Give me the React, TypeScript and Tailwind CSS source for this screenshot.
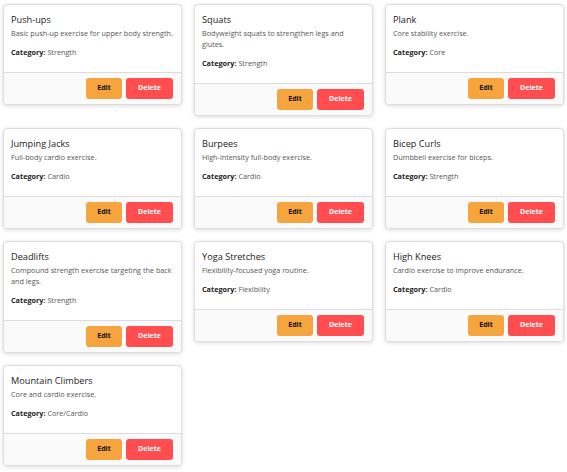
import React from 'react';

interface Exercise {
  name: string;
  description: string;
  category: string;
}

const exercises: Exercise[] = [
  { name: 'Push-ups', description: 'Basic push-up exercise for upper body strength.', category: 'Strength' },
  { name: 'Squats', description: 'Bodyweight squats to strengthen legs and glutes.', category: 'Strength' },
  { name: 'Plank', description: 'Core stability exercise.', category: 'Core' },
  { name: 'Jumping Jacks', description: 'Full-body cardio exercise.', category: 'Cardio' },
  { name: 'Burpees', description: 'High-intensity full-body exercise.', category: 'Cardio' },
  { name: 'Bicep Curls', description: 'Dumbbell exercise for biceps.', category: 'Strength' },
  { name: 'Deadlifts', description: 'Compound strength exercise targeting the back and legs.', category: 'Strength' },
  { name: 'Yoga Stretches', description: 'Flexibility-focused yoga routine.', category: 'Flexibility' },
  { name: 'High Knees', description: 'Cardio exercise to improve endurance.', category: 'Cardio' },
  { name: 'Mountain Climbers', description: 'Core and cardio exercise.', category: 'Core/Cardio' },
];

function ExerciseCard({ exercise }: { exercise: Exercise }) {
  return (
    <div className="flex flex-col overflow-hidden rounded-[4px] border border-[#dcdcdc] bg-white shadow-[0_1px_4px_rgba(0,0,0,0.14)]">
      <div className="px-[7px] pb-[14px] pt-[8px]">
        <h3 className="mb-[2px] text-[9.2px] font-medium leading-[13px] text-[#222]">{exercise.name}</h3>
        <p className="text-[7.25px] leading-[11px] text-[#555]">{exercise.description}</p>
        <p className="mt-[8px] text-[7.25px] leading-[11px] text-[#555]">
          <span className="font-bold text-[#222]">Category:</span> {exercise.category}
        </p>
      </div>
      <div className="flex justify-end gap-[4px] border-t border-[#dcdcdc] bg-[#fafafa] px-[8px] pb-[5px] pt-[5px]">
        <button className="h-[21px] w-[36px] rounded-[3px] bg-[#f6a43e] text-[7px] font-bold text-[#111]">
          Edit
        </button>
        <button className="h-[21px] w-[47px] rounded-[3px] bg-[#ff4d50] text-[7px] font-bold text-white">
          Delete
        </button>
      </div>
    </div>
  );
}

export default function App() {
  return (
    <div className="min-h-screen bg-white px-[3px] pt-[4px] font-['Open_Sans','Noto_Sans',sans-serif]">
      <div className="grid grid-cols-3 items-start gap-3">
        {exercises.map((ex) => (
          <ExerciseCard key={ex.name} exercise={ex} />
        ))}
      </div>
    </div>
  );
}
